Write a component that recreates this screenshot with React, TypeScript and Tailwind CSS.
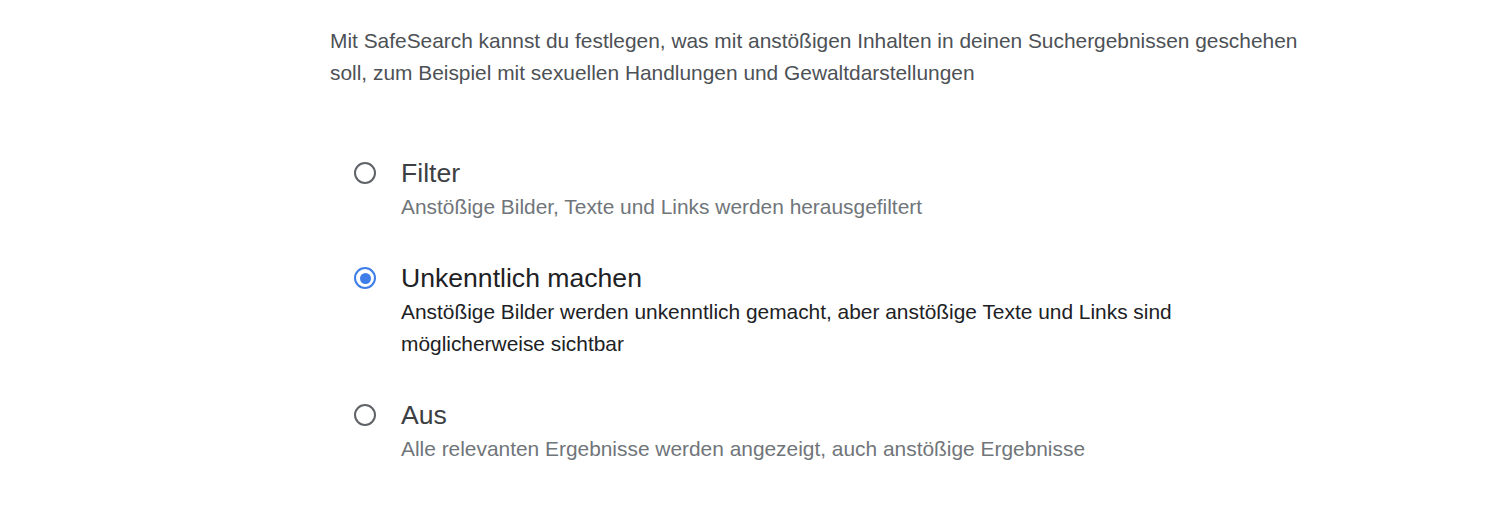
import { useState } from "react";

interface Option {
  id: string;
  title: string;
  description: string;
}

const options: Option[] = [
  {
    id: "filter",
    title: "Filter",
    description: "Anstößige Bilder, Texte und Links werden herausgefiltert",
  },
  {
    id: "blur",
    title: "Unkenntlich machen",
    description:
      "Anstößige Bilder werden unkenntlich gemacht, aber anstößige Texte und Links sind möglicherweise sichtbar",
  },
  {
    id: "off",
    title: "Aus",
    description:
      "Alle relevanten Ergebnisse werden angezeigt, auch anstößige Ergebnisse",
  },
];

export default function App() {
  const [selected, setSelected] = useState<string>("blur");

  return (
    <div className="min-h-[505px] bg-white font-['Liberation_Sans',Arial,sans-serif]">
      <div className="pl-[330px] pt-[25px]">
        <p className="w-[990px] text-[20.9px] leading-[32px] text-[#4d5156]">
          Mit SafeSearch kannst du festlegen, was mit anstößigen Inhalten in
          deinen Suchergebnissen geschehen soll, zum Beispiel mit sexuellen
          Handlungen und Gewaltdarstellungen
        </p>

        <div className="mt-[66px] flex w-[960px] flex-col gap-[37px]">
          {options.map((opt) => {
            const isOn = selected === opt.id;
            return (
              <label
                key={opt.id}
                className="flex cursor-pointer items-start"
                onClick={() => setSelected(opt.id)}
              >
                <div className="flex h-[36px] w-[71px] shrink-0 items-center pl-[24px]">
                  {isOn ? (
                    <span className="flex h-[22px] w-[22px] items-center justify-center rounded-full border-[2.5px] border-[#3f7ee8]">
                      <span className="h-[11px] w-[11px] rounded-full bg-[#3f7ee8]" />
                    </span>
                  ) : (
                    <span className="h-[22px] w-[22px] rounded-full border-[2.5px] border-[#5f6368]" />
                  )}
                </div>
                <div className="flex flex-col">
                  <span
                    className={`text-[26.6px] leading-[36px] ${
                      isOn ? "text-[#202124]" : "text-[#3c4043]"
                    }`}
                  >
                    {opt.title}
                  </span>
                  <span
                    className={`text-[20.9px] leading-[32px] ${
                      isOn ? "text-[#202124]" : "text-[#70757a]"
                    }`}
                  >
                    {opt.description}
                  </span>
                </div>
              </label>
            );
          })}
        </div>
      </div>
    </div>
  );
}
